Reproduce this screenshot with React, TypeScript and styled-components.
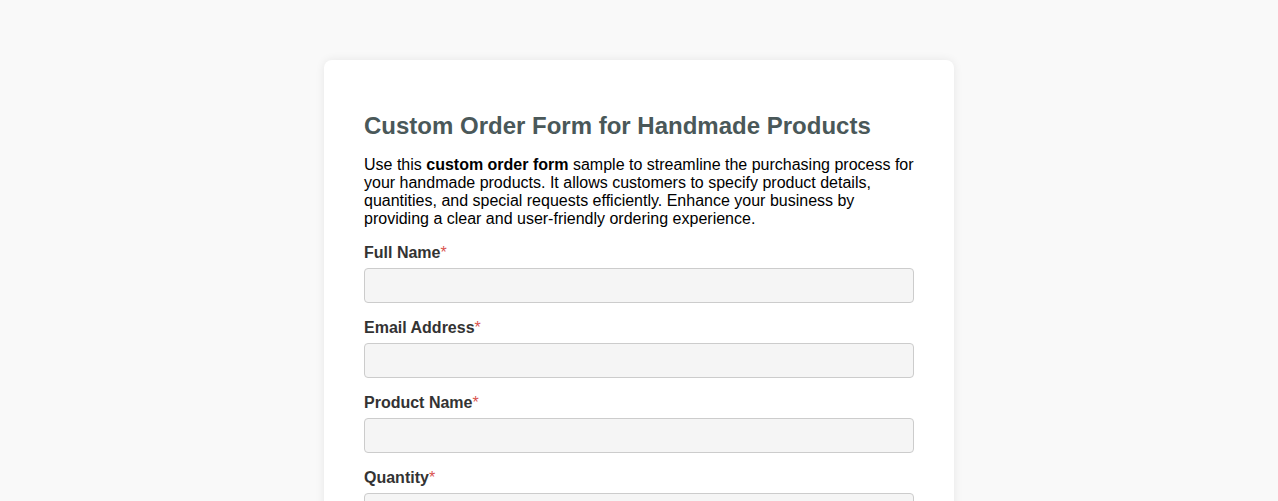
import React from "react";
import styled, { createGlobalStyle } from "styled-components";

const Global = createGlobalStyle`
  html, body { margin: 0; padding: 0; background: #f9f9f9; }
  body { font-family: "Liberation Sans", Arial, sans-serif; }
`;

const Page = styled.div`
  display: flex;
  justify-content: center;
  padding-top: 60px;
`;

const Card = styled.form`
  width: 630px;
  box-sizing: border-box;
  background: #ffffff;
  border-radius: 8px;
  box-shadow: 0 0 10px rgba(0, 0, 0, 0.08);
  padding: 40px;
`;

const Title = styled.h2`
  font-size: 24px;
  font-weight: bold;
  color: #4a5859;
  margin: 12px 0 16px;
`;

const Intro = styled.p`
  font-size: 16px;
  color: #000;
  margin: 0 0 16px;
`;

const Field = styled.div`
  margin-bottom: 16px;
`;

const Label = styled.label`
  display: block;
  font-size: 16px;
  font-weight: bold;
  color: #333;
  margin-bottom: 6px;
`;

const Req = styled.span`
  color: #d9534f;
  font-weight: normal;
`;

const Input = styled.input`
  display: block;
  width: 100%;
  height: 35px;
  box-sizing: border-box;
  border: 1px solid #cccccc;
  border-radius: 4px;
  background: #f5f5f5;
  padding: 8px;
  font-size: 14px;
  font-family: inherit;
`;

const fields = ["Full Name", "Email Address", "Product Name", "Quantity"];

export default function App() {
  return (
    <>
      <Global />
      <Page>
        <Card onSubmit={(e) => e.preventDefault()}>
          <Title>Custom Order Form for Handmade Products</Title>
          <Intro>
            Use this <b>custom order form</b> sample to streamline the purchasing process for your
            handmade products. It allows customers to specify product details, quantities, and
            special requests efficiently. Enhance your business by providing a clear and
            user-friendly ordering experience.
          </Intro>
          {fields.map((f) => (
            <Field key={f}>
              <Label>
                {f}
                <Req>*</Req>
              </Label>
              <Input type="text" />
            </Field>
          ))}
        </Card>
      </Page>
    </>
  );
}
